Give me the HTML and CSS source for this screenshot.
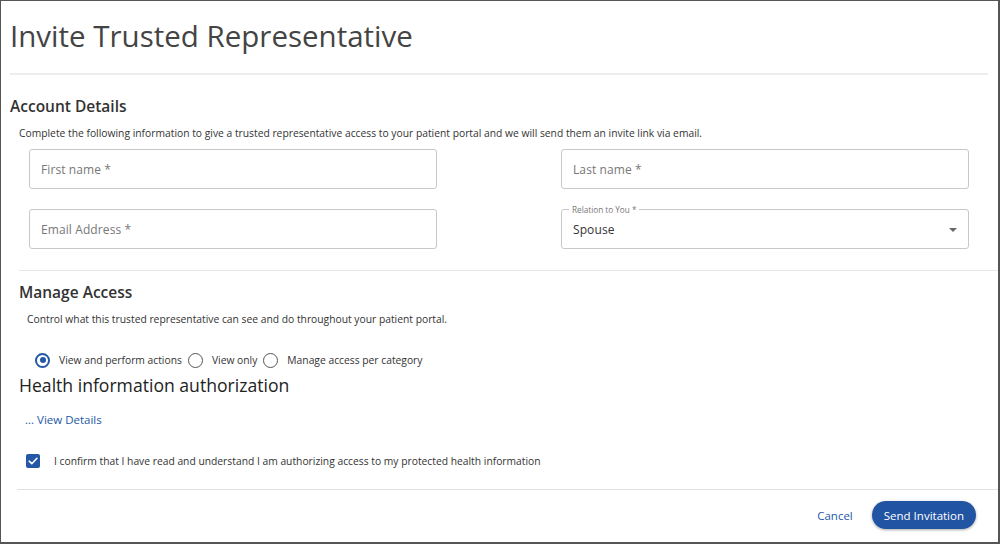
FILE: index.html
```html
<!DOCTYPE html>
<html>
<head>
<meta charset="utf-8">
<link rel="stylesheet" href="styles.css">
</head>
<body>
<div class="frame">
  <h1 class="title">Invite Trusted Representative</h1>
  <div class="rule-top"></div>

  <h2 class="section-title">Account Details</h2>
  <p class="desc">Complete the following information to give a trusted representative access to your patient portal and we will send them an invite link via email.</p>

  <div class="fields">
    <div class="field"><span class="placeholder">First name *</span></div>
    <div class="field"><span class="placeholder">Last name *</span></div>
    <div class="field"><span class="placeholder">Email Address *</span></div>
    <div class="field select">
      <span class="float-label">Relation to You *</span>
      <span class="value">Spouse</span>
      <svg class="caret" width="8" height="4" viewBox="0 0 8 4"><path d="M0 0 L8 0 L4 4 Z" fill="#666"/></svg>
    </div>
  </div>

  <div class="rule-mid"></div>

  <h2 class="section-title manage">Manage Access</h2>
  <p class="desc manage-desc">Control what this trusted representative can see and do throughout your patient portal.</p>

  <div class="radios">
    <span class="radio checked"></span><span class="radio-label">View and perform actions</span>
    <span class="radio"></span><span class="radio-label">View only</span>
    <span class="radio"></span><span class="radio-label">Manage access per category</span>
  </div>

  <h2 class="health">Health information authorization</h2>
  <a class="details">... View Details</a>

  <div class="confirm">
    <span class="checkbox"><svg width="14" height="14" viewBox="0 0 14 14"><path d="M3.2 7.2 L5.8 9.7 L10.9 4.3" fill="none" stroke="#fff" stroke-width="1.6" stroke-linecap="round" stroke-linejoin="round"/></svg></span>
    <span class="confirm-text">I confirm that I have read and understand I am authorizing access to my protected health information</span>
  </div>

  <div class="rule-bottom"></div>

  <div class="footer">
    <a class="cancel">Cancel</a>
    <button class="send">Send Invitation</button>
  </div>
</div>
</body>
</html>
```
FILE: styles.css
```css
* { box-sizing: border-box; }
html, body { margin: 0; padding: 0; background: #fff; }
body { font-family: "Open Sans", "Noto Sans", sans-serif; color: #333; }

.frame {
  width: 1000px;
  height: 544px;
  border-top: 1px solid #555;
  border-left: 1px solid #555;
  border-right: 2px solid #555;
  border-bottom: 2px solid #555;
  overflow: hidden;
}

.title {
  margin: 15px 0 0 9px;
  font-size: 29.5px;
  line-height: 40px;
  font-weight: 400;
  color: #444;
}

.rule-top {
  margin: 17px 10px 0 9px;
  height: 2px;
  background: #ededed;
}

.section-title {
  margin: 19px 0 0 9px;
  font-size: 15.5px;
  line-height: 24px;
  font-weight: 600;
  color: #333;
}

.desc {
  margin: 7px 0 0 18px;
  font-size: 10.3px;
  line-height: 16px;
  color: #333;
}

.fields {
  display: grid;
  grid-template-columns: 408px 408px;
  column-gap: 124px;
  row-gap: 20px;
  margin: 8px 0 0 28px;
}

.field {
  position: relative;
  height: 40px;
  border: 1px solid #c8c8c8;
  border-radius: 3px;
  display: flex;
  align-items: center;
  padding: 0 11px;
}

.placeholder {
  font-size: 12px;
  color: #777;
  letter-spacing: 0.1px;
}

.select .value {
  font-size: 12px;
  color: #333;
  letter-spacing: 0.1px;
}

.float-label {
  position: absolute;
  top: -6px;
  left: 7px;
  padding: 0 3px;
  background: #fff;
  font-size: 8.2px;
  line-height: 11px;
  color: #777;
}

.caret {
  position: absolute;
  right: 11px;
  top: 18px;
}

.rule-mid {
  margin: 21px 0 0 18px;
  height: 1px;
  background: #e6e6e6;
}

.manage {
  margin: 10px 0 0 18px;
  line-height: 22px;
}

.manage-desc {
  margin: 8px 0 0 26px;
}

.radios {
  display: flex;
  align-items: center;
  margin: 24px 0 0 34px;
  height: 18px;
  font-size: 10.3px;
  color: #333;
}

.radio {
  width: 15px;
  height: 15px;
  border: 1.5px solid #555;
  border-radius: 50%;
  flex: none;
  position: relative;
}

.radio.checked {
  border: 2px solid #2458a6;
}

.radio.checked::after {
  content: "";
  position: absolute;
  left: 2.5px;
  top: 2.5px;
  width: 6px;
  height: 6px;
  border-radius: 50%;
  background: #2458a6;
}

.radio-label {
  margin: 0 6px 0 9px;
}

.health {
  margin: 4px 0 0 18px;
  font-size: 17.6px;
  line-height: 24px;
  font-weight: 400;
  color: #222;
}

.details {
  display: block;
  margin: 15px 0 0 24px;
  font-size: 11.5px;
  line-height: 16px;
  color: #2458a6;
}

.confirm {
  display: flex;
  align-items: center;
  margin: 25px 0 0 25px;
  height: 16px;
}

.checkbox {
  width: 14px;
  height: 14px;
  background: #2458a6;
  border-radius: 2px;
  display: flex;
  flex: none;
}

.confirm-text {
  margin-left: 14px;
  font-size: 10.3px;
  color: #333;
}

.rule-bottom {
  margin: 20px 0 0 16px;
  height: 1px;
  background: #e0e0e0;
}

.footer {
  display: flex;
  justify-content: flex-end;
  align-items: center;
  gap: 19px;
  margin-top: 11px;
  padding-right: 22px;
}

.cancel {
  font-size: 11.5px;
  color: #2458a6;
}

.send {
  height: 28px;
  padding: 0 12px;
  border: none;
  border-radius: 14px;
  background: #2154a2;
  color: #fff;
  font-family: "Open Sans", "Noto Sans", sans-serif;
  font-size: 11.5px;
  font-weight: 500;
  box-shadow: 0 1px 3px rgba(0,0,0,0.35);
}
```
